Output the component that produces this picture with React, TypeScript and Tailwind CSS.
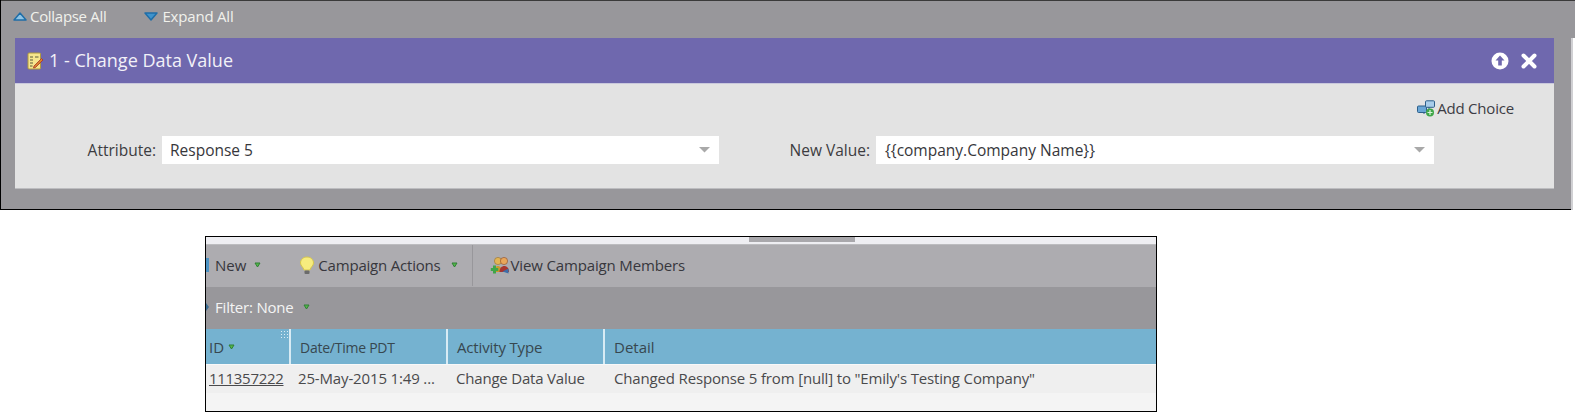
import React from "react";

const font = { fontFamily: '"Open Sans", sans-serif' };

function TriUp() {
  return (
    <svg width="14" height="9" viewBox="0 0 14 9" className="shrink-0">
      <path d="M7 1 L13 8 H1 Z" fill="#8fc4e6" stroke="#1f6ea8" strokeWidth="1.5" strokeLinejoin="round" />
    </svg>
  );
}
function TriDown() {
  return (
    <svg width="14" height="9" viewBox="0 0 14 9" className="shrink-0">
      <path d="M1 1 H13 L7 8 Z" fill="#3f93cc" stroke="#1f6ea8" strokeWidth="1.5" strokeLinejoin="round" />
    </svg>
  );
}
function GreenDrop() {
  return (
    <svg width="7" height="6" viewBox="0 0 7 6" className="shrink-0">
      <path d="M1 1 H6 L3.5 5 Z" fill="#55b84a" stroke="#2f7f35" strokeWidth="1" strokeLinejoin="round" />
    </svg>
  );
}
function GreyCaret() {
  return (
    <svg width="11" height="6" viewBox="0 0 11 6" className="shrink-0">
      <path d="M0 0 H11 L5.5 5.5 Z" fill="#a9a9a9" />
    </svg>
  );
}
function Note() {
  return (
    <svg width="17" height="18" viewBox="0 0 17 18" className="shrink-0">
      <rect x="1" y="1" width="12.5" height="16" rx="1" fill="#f6e58d" stroke="#b09a3c" />
      <path d="M3 5 H6 M8 5 H11.5 M3 8 H6 M3 11 H6 M3 14 H5.5" stroke="#5a5a3a" strokeWidth="1" />
      <path d="M7 14 L14.5 6.5 L16 8 L8.5 15.5 L6.5 16 Z" fill="#d9822b" stroke="#a8322a" strokeWidth="0.8" />
    </svg>
  );
}
function ArrowCircle() {
  return (
    <svg width="18" height="18" viewBox="0 0 18 18">
      <circle cx="9" cy="9" r="8.5" fill="#ffffff" />
      <path d="M9 3.5 L13.5 8.5 H10.8 V13.5 H7.2 V8.5 H4.5 Z" fill="#6f68ae" />
    </svg>
  );
}
function CloseX() {
  return (
    <svg width="16" height="16" viewBox="0 0 16 16">
      <path d="M2.5 2.5 L13.5 13.5 M13.5 2.5 L2.5 13.5" stroke="#ffffff" strokeWidth="4" strokeLinecap="round" />
    </svg>
  );
}
function AddChoice() {
  return (
    <svg width="19" height="17" viewBox="0 0 19 17" className="shrink-0">
      <rect x="0.5" y="6" width="9" height="6.5" rx="1" fill="#6aa6d6" stroke="#2d5f8a" />
      <rect x="8.5" y="0.8" width="9" height="6.5" rx="1" fill="#a9cdea" stroke="#2d5f8a" />
      <path d="M7 12 V14 M12 7 V9" stroke="#2d5f8a" />
      <circle cx="13" cy="12.5" r="4" fill="#3fa648" />
      <path d="M13 10 V15 M10.5 12.5 H15.5" stroke="#d9f2db" strokeWidth="1.2" />
    </svg>
  );
}
function Bulb() {
  return (
    <svg width="16" height="19" viewBox="0 0 16 19" className="shrink-0">
      <path d="M8 1 C3.8 1 1.5 3.9 1.5 7 C1.5 9.8 4.4 11 5 14 H11 C11.6 11 14.5 9.8 14.5 7 C14.5 3.9 12.2 1 8 1 Z" fill="#f7ec7e" stroke="#d6c64c" />
      <rect x="5.5" y="14.5" width="5" height="3.5" rx="1" fill="#6b6b6b" />
    </svg>
  );
}
function Members() {
  return (
    <svg width="20" height="19" viewBox="0 0 20 19" className="shrink-0">
      <circle cx="8" cy="5" r="3.6" fill="#e2b454" stroke="#97702a" strokeWidth="0.6" />
      <circle cx="14" cy="5" r="3.6" fill="#e8a65a" stroke="#8a4a2a" strokeWidth="0.6" />
      <path d="M4 16 C4 8 12 8 12 16 Z" fill="#c99a2e" />
      <path d="M9.5 16 C9.5 8 19 8 19 16 Z" fill="#a8352f" />
      <path d="M4.5 9.5 V17.5 M0.8 13.5 H8.2" stroke="#3fa648" strokeWidth="3" />
      <path d="M12.5 15.5 L18.5 12.5 V17.5 Z" fill="#3d6ea8" />
    </svg>
  );
}

function Field({ label, value, labelClass, inputClass }: { label: string; value: string; labelClass: string; inputClass: string }) {
  return (
    <div className="flex items-center">
      <span className={`text-[15.5px] text-right text-[#3c3c40] pt-[1px] ${labelClass}`}>{label}</span>
      <div className={`h-[28px] bg-white flex items-center justify-between pr-[9px] text-[15.5px] text-[#37373b] ${inputClass}`}>
        <span className="pt-[1px]">{value}</span>
        <GreyCaret />
      </div>
    </div>
  );
}

function HeaderCell({ className, children }: { className: string; children: React.ReactNode }) {
  return <div className={`h-full flex items-center border-r-2 border-[#d8ebf4] ${className}`}>{children}</div>;
}

export default function App() {
  return (
    <div className="w-[1575px] h-[412px] bg-white overflow-hidden" style={font}>
      <div className="h-[210px] border-l border-black">
        <div className="h-[38px] bg-[#98979b] border-t border-[#3a3a3a] pl-[12px] pb-[6px] flex items-center text-[15px] text-[#f1f1ec]">
          <span className="flex items-center gap-[3px]">
            <TriUp />
            <span className="tracking-[-0.3px]">Collapse All</span>
          </span>
          <span className="flex items-center gap-[4px] ml-[38px]">
            <TriDown />
            <span className="tracking-[-0.2px]">Expand All</span>
          </span>
        </div>
        <div className="flex h-[172px]">
          <div className="w-[1570px] h-full bg-[#98979b] border-b border-black pl-[14px] pr-[17px]">
            <div className="h-[46px] bg-[#6f68ae] flex items-center justify-between pl-[12px] pr-[17px] text-[#f2f1f8] border-b border-[#c9c8dc]">
              <div className="flex items-center gap-[5px]">
                <Note />
                <span className="text-[18px]">1 - Change Data Value</span>
              </div>
              <div className="flex items-center gap-[12px]">
                <ArrowCircle />
                <CloseX />
              </div>
            </div>
            <div className="h-[105px] bg-[#e3e3e3] border-b border-[#bdbdc0]">
              <div className="h-[52px] flex justify-end items-start pt-[13px] pr-[40px]">
                <span className="flex items-center text-[15px] tracking-[-0.2px] text-[#3c3c44]">
                  <AddChoice />
                  <span className="ml-[1px]">Add Choice</span>
                </span>
              </div>
              <div className="flex">
                <Field label="Attribute:" value="Response 5" labelClass="w-[147px] pr-[6px]" inputClass="w-[557px] pl-[8px]" />
                <Field label="New Value:" value="{{company.Company Name}}" labelClass="w-[157px] pr-[6px]" inputClass="w-[558px] pl-[9px]" />
              </div>
            </div>
          </div>
          <div className="w-[2px] h-full bg-[#d0d0d3]" />
        </div>
      </div>

      <div className="mt-[26px] ml-[205px] w-[952px] h-[176px] border-[1.5px] border-black bg-[#f4f4f4]">
        <div className="h-[7px] bg-[#eeeef2]">
          <div className="w-[106px] h-[5px] bg-[#a9a8ac] ml-[543px]" />
        </div>
        <div className="h-[43px] bg-[#adacb0] flex items-center text-[15px] text-[#37373d] border-t border-[#bcbcbf] pb-[2px]">
          <div className="w-[3px] h-[14px] bg-[#4c93c4] mr-[6px]" />
          <span>New</span>
          <span className="ml-[8px]"><GreenDrop /></span>
          <span className="ml-[38px] flex items-center gap-[3px]">
            <Bulb />
            <span className="tracking-[-0.2px]">Campaign Actions</span>
          </span>
          <span className="ml-[10px]"><GreenDrop /></span>
          <div className="ml-[14px] w-px h-[41px] bg-[#98979b]" />
          <span className="ml-[17px] flex items-center gap-[1px]">
            <Members />
            <span className="tracking-[-0.15px]">View Campaign Members</span>
          </span>
        </div>
        <div className="h-[42px] bg-[#98979b] flex items-center text-[15px] text-[#f4f4f4] pb-[2px]">
          <div className="w-0 h-0 border-y-[4px] border-y-transparent border-l-[3px] border-l-[#3b6e94] mr-[6px]" />
          <span className="tracking-[-0.2px]">Filter: None</span>
          <span className="ml-[9px]"><GreenDrop /></span>
        </div>
        <div className="h-[35px] bg-[#75b2d0] flex items-center text-[15px] text-[#37474f]">
          <HeaderCell className="w-[85px] pl-[3px] pt-[1px] gap-[4px] relative">
            <span>ID</span>
            <GreenDrop />
            <span className="absolute right-[1px] top-[1px] w-[8px] h-[8px] bg-[radial-gradient(#dcecf4_1px,transparent_1px)] bg-[length:3px_3px]" />
          </HeaderCell>
          <HeaderCell className="w-[157px] pl-[9px] pt-[1px]"><span className="text-[14px] tracking-[-0.25px]">Date/Time PDT</span></HeaderCell>
          <HeaderCell className="w-[157px] pl-[9px] pt-[1px]"><span className="tracking-[-0.15px]">Activity Type</span></HeaderCell>
          <div className="pl-[9px] pt-[1px]">Detail</div>
        </div>
        <div className="h-[29px] bg-[#efefef] flex items-center text-[15px] text-[#4a4a4c] border-t border-[#f8f8f8] pb-[2px]">
          <a className="w-[85px] pl-[3px] underline tracking-[-0.3px]">111357222</a>
          <span className="w-[157px] pl-[7px] tracking-[-0.15px]">25-May-2015 1:49 ...</span>
          <span className="w-[157px] pl-[8px] tracking-[-0.2px]">Change Data Value</span>
          <span className="pl-[9px] tracking-[-0.16px]">Changed Response 5 from [null] to "Emily's Testing Company"</span>
        </div>
      </div>
    </div>
  );
}
